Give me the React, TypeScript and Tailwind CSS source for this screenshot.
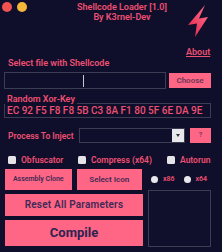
import React from 'react'

const pink = 'text-[#ee4f72]'

function Check({ label, className = '' }: { label: string; className?: string }) {
  return (
    <div className={`flex items-center gap-[5px] ${className}`}>
      <span className="w-[8px] h-[8px] rounded-[1.5px] bg-[#e4e4e8]" />
      <span className={`${pink} text-[8.5px] leading-[10px] font-semibold`}>{label}</span>
    </div>
  )
}

function Radio({ label }: { label: string }) {
  return (
    <div className="flex items-center gap-[5px]">
      <span className="w-[7px] h-[7px] rounded-full bg-[#e8e8ec]" />
      <span className={`${pink} text-[7px] font-semibold`}>{label}</span>
    </div>
  )
}

function Bolt() {
  return (
    <svg width="20" height="32" viewBox="0 0 20 32">
      <defs>
        <linearGradient id="bolt" x1="1" y1="0" x2="0" y2="1">
          <stop offset="0" stopColor="#ff7390" />
          <stop offset="1" stopColor="#e21f45" />
        </linearGradient>
      </defs>
      <polygon points="17,0 0,20 9,18.5 7,32 20,12 11,13.5" fill="url(#bolt)" />
    </svg>
  )
}

export default function App() {
  return (
    <div
      className="w-[222px] h-[252px] bg-[#0f0f2b] overflow-hidden"
      style={{ fontFamily: 'Roboto, "Noto Sans", sans-serif' }}
    >
      <div className="flex h-[58px]">
        <div className="flex gap-[5px] pl-[2px] pt-[2px] w-[60px]">
          <span className="w-[10px] h-[10px] rounded-full bg-[#f0524f]" />
          <span className="w-[10px] h-[10px] rounded-full bg-[#f4b73a]" />
        </div>
        <div className={`w-[124px] text-center pt-[2px] text-[9px] font-semibold leading-[10px] ${pink}`}>
          <div>Shellcode Loader [1.0]</div>
          <div>By K3rnel-Dev</div>
        </div>
        <div className="flex flex-col items-center pt-[5px] pl-[2px]">
          <Bolt />
          <span className={`${pink} mt-[10px] text-[9px] leading-[10px] font-semibold underline`}>About</span>
        </div>
      </div>

      <div className="px-[4px]">
        <div className={`${pink} text-[9px] font-semibold leading-[10px] pl-[4px]`}>Select file with Shellcode</div>

        <div className="flex items-center mt-[4px] h-[17px]">
          <div className="w-[162px] h-[17px] border border-[#3c3c52] bg-[#0f0f2b] flex items-center">
            <span className="ml-[78px] w-px h-[12px] bg-[#c8c8d0]" />
          </div>
          <button className="ml-[3px] w-[42px] h-[15px] bg-[#ff6584] text-[#6a3858] text-[8px] leading-[10px] font-semibold">
            Choose
          </button>
        </div>

        <div className="mt-[5px]">
          <div className="relative z-10 w-fit bg-[#0f0f2b] pl-[3px] pr-[2px] text-[9px] font-semibold leading-[10px] text-[#ee4f72]">
            Random Xor-Key
          </div>
          <div className="-mt-[1px] w-[207px] h-[15px] border border-[#3c3c52] flex items-center pl-[2px]">
            <span className={`${pink} text-[10px] leading-[12px] font-medium`}>EC 92 F5 F8 F8 5B C3 8A F1 80 5F 6E DA 9E</span>
          </div>
        </div>

        <div className="flex items-center mt-[10px] h-[15px]">
          <span className={`${pink} text-[8.5px] leading-[10px] font-semibold w-[75px] pl-[4px]`}>Process To Inject</span>
          <div className="w-[106px] h-[15px] border border-[#3c3c52] flex justify-end">
            <div className="w-[12px] h-full bg-[#e8e8ec] flex items-center justify-center">
              <span className="w-0 h-0 border-l-[2px] border-r-[2px] border-t-[3px] border-l-transparent border-r-transparent border-t-[#333]" />
            </div>
          </div>
          <button className="ml-[5px] w-[21px] h-[15px] bg-[#ff6584] text-[#6a3858] text-[7px] leading-[9px] font-semibold">?</button>
        </div>

        <div className="flex items-center mt-[12px] h-[10px] pl-[4px]">
          <Check label="Obfuscator" className="w-[70px]" />
          <Check label="Compress (x64)" className="w-[89px]" />
          <Check label="Autorun" />
        </div>

        <div className="flex mt-[4px] gap-[6px]">
          <div className="w-[138px] pl-[1px]">
            <div className="flex gap-[5px]">
              <button className="w-[67px] h-[21px] bg-[#ff6584] text-[#3d2a56] text-[7px] leading-[9px] font-semibold">
                Assembly Clone
              </button>
              <button className="w-[66px] h-[21px] bg-[#ff6584] text-[#3d2a56] text-[8px] leading-[10px] font-semibold">
                Select Icon
              </button>
            </div>
            <button className="mt-[4px] w-[138px] h-[22px] bg-[#ff6584] text-[#3d2a56] text-[10px] leading-[12px] font-semibold tracking-[0.2px]">
              Reset All Parameters
            </button>
            <button className="mt-[4px] w-[138px] h-[26px] bg-[#ff6584] text-[#2b2452] text-[13px] leading-[16px] font-bold">
              Compile
            </button>
          </div>
          <div className="w-[63px]">
            <div className="flex items-center gap-[9px] h-[20px] pl-[3px]">
              <Radio label="x86" />
              <Radio label="x64" />
            </div>
            <div className="mt-[1px] w-[63px] h-[57px] border border-[#3c3c52] bg-[#10102c]" />
          </div>
        </div>
      </div>
    </div>
  )
}
